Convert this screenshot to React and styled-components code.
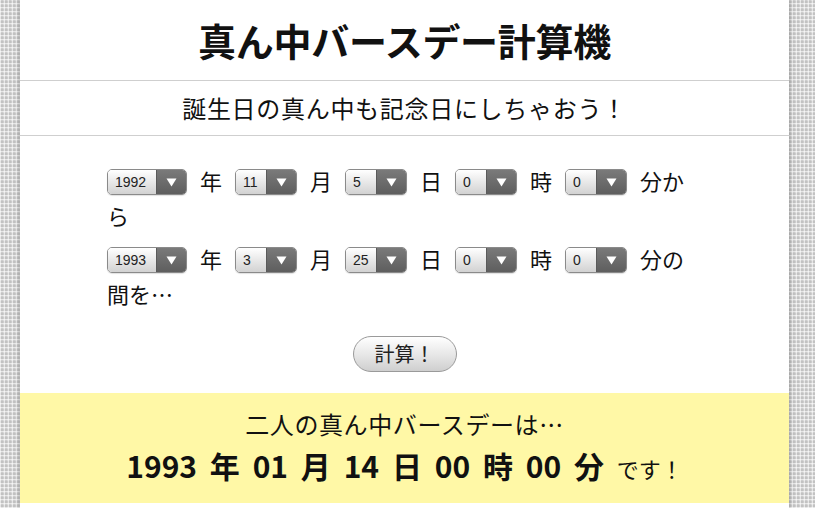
import React from "react";
import styled, { createGlobalStyle } from "styled-components";

const Global = createGlobalStyle`
  html, body { margin: 0; padding: 0; }
  body {
    background-color: #e2e2e2;
    background-image:
      linear-gradient(90deg, rgba(255,255,255,0.5) 1px, transparent 1px),
      linear-gradient(0deg, rgba(255,255,255,0.5) 1px, transparent 1px),
      radial-gradient(circle, #c2c2c2 45%, #dadada 70%);
    background-size: 4px 4px, 4px 4px, 4px 4px;
    font-family: "Noto Sans CJK JP", "Noto Sans", sans-serif;
    color: #111;
  }
`;

const Page = styled.div`
  margin-left: 20px;
  width: 769px;
  min-height: 508px;
  background: #fff;
  box-shadow: 0 0 5px rgba(0, 0, 0, 0.3);
  overflow: hidden;
`;

const Header = styled.h1`
  margin: 0;
  height: 80px;
  line-height: 80px;
  text-align: center;
  font-size: 38px;
  font-weight: 700;
  letter-spacing: -0.3px;
  border-bottom: 1px solid #cfcfcf;
`;

const Sub = styled.h2`
  margin: 0;
  height: 54px;
  line-height: 54px;
  text-align: center;
  font-size: 24px;
  font-weight: 400;
  letter-spacing: 0.7px;
  border-bottom: 1px solid #cfcfcf;
`;

const Form = styled.div`
  width: 595px;
  margin: 0 auto;
  padding-top: 27px;
`;

const Para = styled.p`
  margin: 0 0 8px;
  font-size: 22px;
  line-height: 35px;
`;

const Sel = styled.span`
  display: inline-flex;
  vertical-align: middle;
  position: relative;
  top: -2px;
  width: ${(p) => p.$w}px;
  height: 26px;
  margin: 0 13px 0 ${(p) => (p.$first ? 0 : 13)}px;
  box-sizing: border-box;
  border: 1px solid #8a8a8a;
  border-radius: 5px;
  overflow: hidden;
  font-family: "Liberation Sans", Arial, sans-serif;
  font-size: 14px;
  line-height: 24px;
  box-shadow: 0 1px 1px rgba(0, 0, 0, 0.12);
`;

const SelValue = styled.span`
  flex: 1;
  padding-left: 7px;
  color: #222;
  background: linear-gradient(#ffffff, #e6e6e6 55%, #d2d2d2);
`;

const SelArrow = styled.span`
  width: 29px;
  display: flex;
  align-items: center;
  justify-content: center;
  background: linear-gradient(#7a7a7a, #5e5e5e);
  border-left: 1px solid #5a5a5a;
`;

const Tri = () => (
  <svg width="11" height="9" viewBox="0 0 11 9">
    <path d="M0.5 0.5 L10.5 0.5 L5.5 8.5 Z" fill="#fff" />
  </svg>
);

const Select = ({ value, w = 62, first }) => (
  <Sel $w={w} $first={first}>
    <SelValue>{value}</SelValue>
    <SelArrow>
      <Tri />
    </SelArrow>
  </Sel>
);

const ButtonRow = styled.div`
  display: flex;
  justify-content: center;
  padding: 17px 0 21px;
`;

const Button = styled.button`
  width: 104px;
  height: 36px;
  border-radius: 18px;
  border: 1px solid #9a9a9a;
  background: linear-gradient(#ffffff, #e8e8e8 50%, #cfcfcf);
  font-family: "Noto Sans CJK JP", sans-serif;
  font-size: 20px;
  color: #222;
  padding: 0;
  line-height: 34px;
`;

const Result = styled.div`
  background: #fff8a6;
  height: 110px;
  box-sizing: border-box;
  padding-top: 13px;
  text-align: center;
`;

const ResultLead = styled.div`
  font-size: 24px;
  line-height: 36px;
  letter-spacing: 0.6px;
`;

const ResultDate = styled.div`
  margin-top: 3px;
  font-size: 30px;
  line-height: 40px;
  font-weight: 700;
  word-spacing: 6px;
`;

const Desu = styled.span`
  font-weight: 400;
  font-size: 22px;
  word-spacing: 0;
`;

export default function App() {
  return (
    <>
      <Global />
      <Page>
        <Header>真ん中バースデー計算機</Header>
        <Sub>誕生日の真ん中も記念日にしちゃおう！</Sub>
        <Form>
          <Para>
            <Select value="1992" w={80} first />年<Select value="11" />月
            <Select value="5" />日<Select value="0" />時<Select value="0" />分から
          </Para>
          <Para>
            <Select value="1993" w={80} first />年<Select value="3" />月
            <Select value="25" />日<Select value="0" />時<Select value="0" />分の間を…
          </Para>
        </Form>
        <ButtonRow>
          <Button>計算！</Button>
        </ButtonRow>
        <Result>
          <ResultLead>二人の真ん中バースデーは…</ResultLead>
          <ResultDate>
            1993 年 01 月 14 日 00 時 00 分 <Desu>です！</Desu>
          </ResultDate>
        </Result>
      </Page>
    </>
  );
}
